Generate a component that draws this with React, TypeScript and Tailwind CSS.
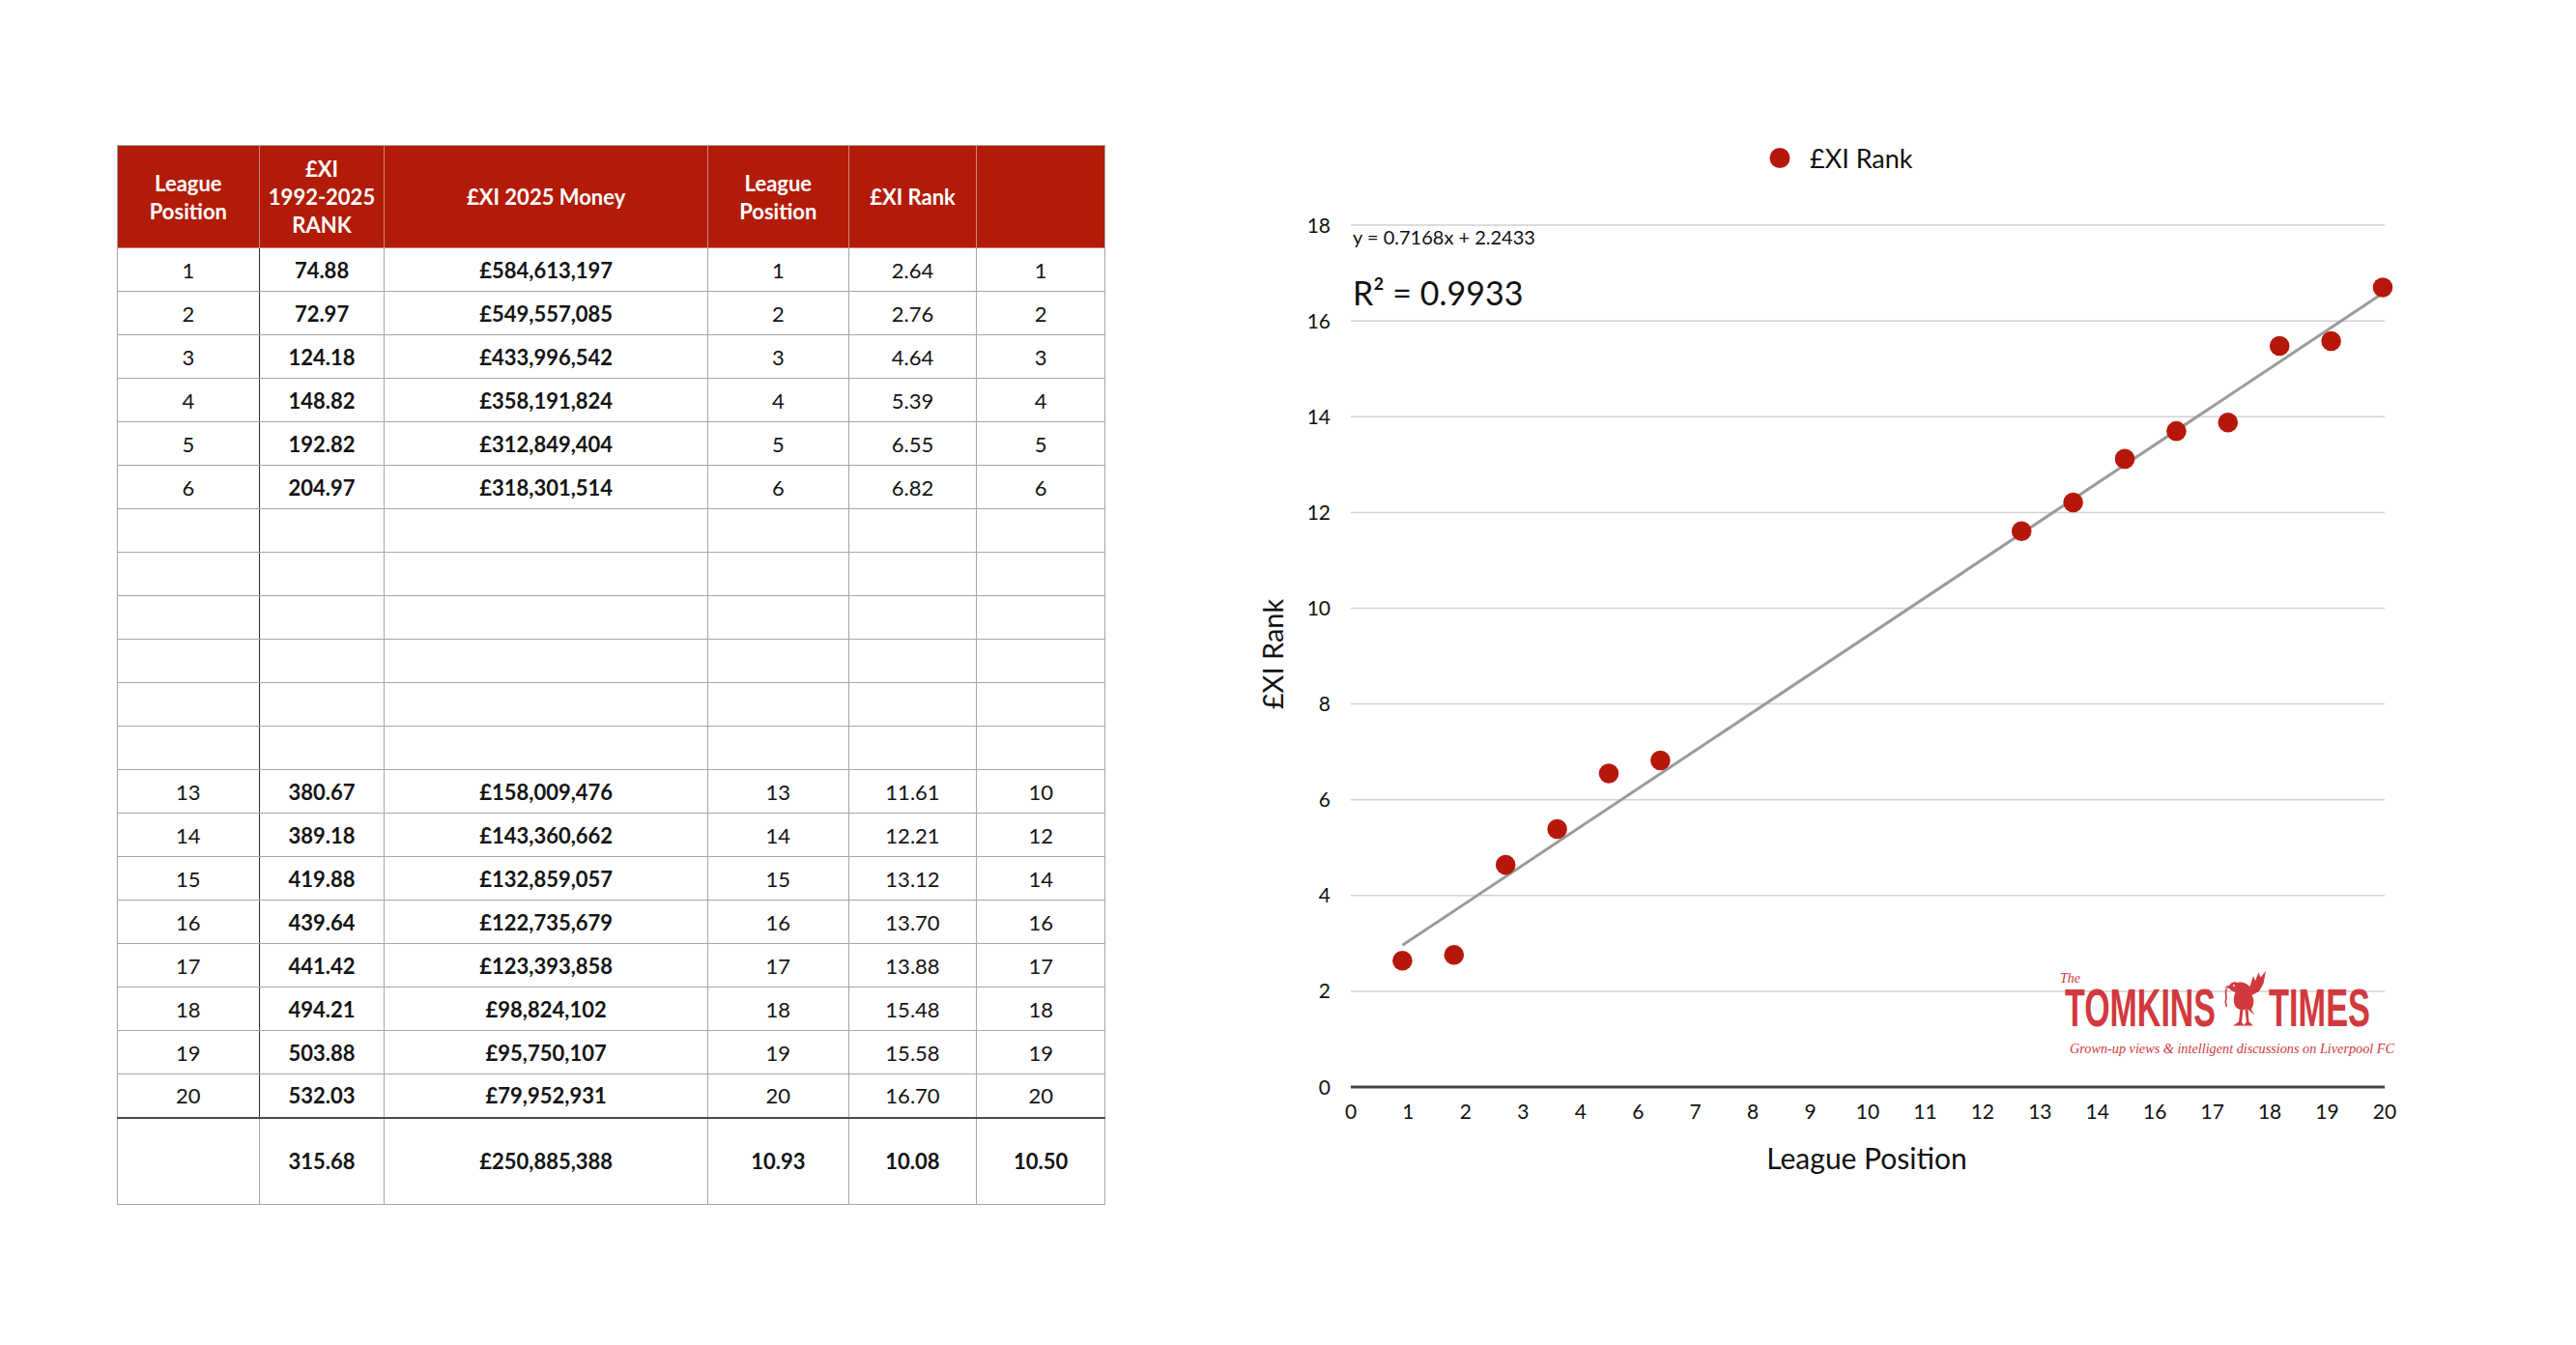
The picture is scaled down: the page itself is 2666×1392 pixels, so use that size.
type Row = (string | number)[]

const TOP: Row[] = [
  [1, '74.88', '£584,613,197', 1, '2.64', 1],
  [2, '72.97', '£549,557,085', 2, '2.76', 2],
  [3, '124.18', '£433,996,542', 3, '4.64', 3],
  [4, '148.82', '£358,191,824', 4, '5.39', 4],
  [5, '192.82', '£312,849,404', 5, '6.55', 5],
  [6, '204.97', '£318,301,514', 6, '6.82', 6],
]

const BOTTOM: Row[] = [
  [13, '380.67', '£158,009,476', 13, '11.61', 10],
  [14, '389.18', '£143,360,662', 14, '12.21', 12],
  [15, '419.88', '£132,859,057', 15, '13.12', 14],
  [16, '439.64', '£122,735,679', 16, '13.70', 16],
  [17, '441.42', '£123,393,858', 17, '13.88', 17],
  [18, '494.21', '£98,824,102', 18, '15.48', 18],
  [19, '503.88', '£95,750,107', 19, '15.58', 19],
  [20, '532.03', '£79,952,931', 20, '16.70', 20],
]

const BLANK: Row[] = Array.from({ length: 6 }, () => ['', '', '', '', '', ''])

const TOTAL: Row = ['', '315.68', '£250,885,388', '10.93', '10.08', '10.50']

// chart scale, in page pixels
const X0 = 1398
const XSTEP = 53.4
const XEND = 2468
const Y0 = 1125
const YSTEP = 49.55
const px = (v: number) => X0 + v * XSTEP
const py = (v: number) => Y0 - v * YSTEP

const POINTS: [number, number][] = [
  [1, 2.64], [2, 2.76], [3, 4.64], [4, 5.39], [5, 6.55], [6, 6.82],
  [13, 11.61], [14, 12.21], [15, 13.12], [16, 13.7], [17, 13.88],
  [18, 15.48], [19, 15.58], [20, 16.7],
]

// the x labels are spaced evenly, with 5 and 15 missing
const X_LABELS = ['0', '1', '2', '3', '4', '6', '7', '8', '9', '10', '11', '12', '13', '14', '16', '17', '18', '19', '20']

const cell = 'h-[45px] p-0 text-center align-middle border border-[#a6a6a6]'

function BodyRow({ row }: { row: Row }) {
  return (
    <tr>
      {row.map((v, i) => (
        <td
          key={i}
          className={`${cell} ${i === 0 ? 'border-r-[#2b2b2b]' : ''} ${i === 1 || i === 2 ? 'font-bold' : 'font-normal'}`}
        >
          {v}
        </td>
      ))}
    </tr>
  )
}

function RankTable() {
  const head = 'h-[106px] p-0 text-center align-middle bg-[#b21b07] text-white font-bold text-[22px] leading-[29px] border border-[#c98a80]'
  return (
    <table className="w-[1023px] table-fixed border-collapse font-['Lato',sans-serif] text-[22px] text-[#141414]">
      <colgroup>
        <col className="w-[146px]" />
        <col className="w-[129px]" />
        <col className="w-[333px]" />
        <col className="w-[145px]" />
        <col className="w-[132px]" />
        <col className="w-[132px]" />
      </colgroup>
      <thead>
        <tr>
          <th className={`${head} border-l-[#a6a6a6] border-t-[#a6a6a6]`}>
            League
            <br />
            Position
          </th>
          <th className={`${head} border-t-[#a6a6a6]`}>
            £XI
            <br />
            1992-2025
            <br />
            RANK
          </th>
          <th className={`${head} border-t-[#a6a6a6]`}>£XI 2025 Money</th>
          <th className={`${head} border-t-[#a6a6a6]`}>
            League
            <br />
            Position
          </th>
          <th className={`${head} border-t-[#a6a6a6]`}>£XI Rank</th>
          <th className={`${head} border-r-[#a6a6a6] border-t-[#a6a6a6]`}></th>
        </tr>
      </thead>
      <tbody>
        {TOP.map((r, i) => (
          <BodyRow key={`t${i}`} row={r} />
        ))}
        {BLANK.map((r, i) => (
          <BodyRow key={`b${i}`} row={r} />
        ))}
        {BOTTOM.map((r, i) => (
          <BodyRow key={`m${i}`} row={r} />
        ))}
        <tr>
          {TOTAL.map((v, i) => (
            <td
              key={i}
              className="h-[90px] p-0 text-center align-middle font-bold border border-[#a6a6a6] border-t-2 border-t-[#4a4a4a]"
            >
              {v}
            </td>
          ))}
        </tr>
      </tbody>
    </table>
  )
}

function TomkinsLogo() {
  const red = '#d2393e'
  return (
    <g fill={red}>
      <text x={2132} y={1017} fontFamily="'Liberation Serif', serif" fontStyle="italic" fontSize={14}>
        The
      </text>
      <text
        x={2137}
        y={1062}
        fontFamily="'Liberation Sans', sans-serif"
        fontWeight={700}
        fontSize={56}
        textLength={156}
        lengthAdjust="spacingAndGlyphs"
      >
        TOMKINS
      </text>
      {/* liver bird */}
      <g transform="translate(2302,1004)">
        <path d="M14 13 C10 11 7 13 5 16 L0 17.5 L5 19 C7 21.5 9.5 22 11.5 23 C9.5 28 9 33 11.5 37.5 C14.5 41.5 19.5 42 24 40 L31 46.5 L28 40.5 C31 35.5 31 30 28.5 26 L36 22 L40.5 14 L43 1 L37.5 7.5 L35.5 2.5 L32 11 L30 6 L26.5 17 C23 14 18.5 11.5 14 13 Z" />
        <path d="M16.5 40 L15 53.5 L9 57.5 L21 57.5 L18 54 L19.5 40.5 Z" />
        <path d="M21.5 40.5 L23 53.5 L20 57.5 L30 57.5 L25.5 53.5 L24.5 40 Z" />
        <path d="M3 19 C-1 23 4 27 1.5 31.5 C0.5 34 3 36 2 38" fill="none" stroke={red} strokeWidth={1.6} />
        <circle cx={10} cy={16} r={1} fill="#fff" />
      </g>
      <text
        x={2348}
        y={1062}
        fontFamily="'Liberation Sans', sans-serif"
        fontWeight={700}
        fontSize={56}
        textLength={105}
        lengthAdjust="spacingAndGlyphs"
      >
        TIMES
      </text>
      <text
        x={2142}
        y={1090}
        fontFamily="'Liberation Serif', serif"
        fontStyle="italic"
        fontSize={14}
        textLength={336}
        lengthAdjust="spacingAndGlyphs"
      >
        Grown-up views &amp; intelligent discussions on Liverpool FC
      </text>
    </g>
  )
}

function ScatterChart() {
  const font = "'Lato', 'Open Sans', sans-serif"
  const dot = '#b5180b'
  const grid = [2, 4, 6, 8, 10, 12, 14, 16, 18]
  const yAt = (x: number) => 0.7168 * x + 2.2433
  const labelStep = (XEND - X0) / 18
  return (
    <svg
      className="mt-[120px] block shrink-0"
      width={1240}
      height={1130}
      viewBox="1280 120 1240 1130"
      fontFamily={font}
    >
      {/* legend */}
      <circle cx={1842} cy={163.5} r={10.5} fill={dot} />
      <text x={1873} y={174} fontSize={27} fill="#111">
        £XI Rank
      </text>

      {/* grid */}
      {grid.map((g) => (
        <line key={g} x1={X0} x2={XEND} y1={py(g)} y2={py(g)} stroke="#d2d2d2" strokeWidth={1.5} />
      ))}
      <line x1={X0} x2={XEND} y1={Y0} y2={Y0} stroke="#444" strokeWidth={3} />

      {/* y labels */}
      {[0, ...grid].map((g) => (
        <text key={g} x={1377} y={py(g) + 7.5} fontSize={21} textAnchor="end" fill="#111">
          {g}
        </text>
      ))}

      {/* x labels */}
      {X_LABELS.map((l, i) => (
        <text key={i} x={X0 + i * labelStep} y={1158} fontSize={21} textAnchor="middle" fill="#111">
          {l}
        </text>
      ))}

      {/* trend line */}
      <line x1={px(1)} y1={py(yAt(1))} x2={px(20)} y2={py(yAt(20))} stroke="#9b9b9b" strokeWidth={3} />

      {POINTS.map(([x, y]) => (
        <circle key={x} cx={px(x)} cy={py(y)} r={10.3} fill={dot} />
      ))}

      <text x={1400} y={253} fontSize={20} fill="#111">
        y = 0.7168x + 2.2433
      </text>
      <text x={1400} y={316} fontSize={34} fill="#111">
        R² = 0.9933
      </text>

      <text transform="translate(1328,677) rotate(-90)" fontSize={29} textAnchor="middle" fill="#111">
        £XI Rank
      </text>
      <text x={1932} y={1210} fontSize={30} textAnchor="middle" fill="#111">
        League Position
      </text>

      <TomkinsLogo />
    </svg>
  )
}

export default function App() {
  return (
    <div className="flex h-[1392px] w-[2666px] items-start overflow-hidden bg-white">
      <div className="w-[1280px] shrink-0 pl-[121px] pt-[150px]">
        <RankTable />
      </div>
      <ScatterChart />
    </div>
  )
}
